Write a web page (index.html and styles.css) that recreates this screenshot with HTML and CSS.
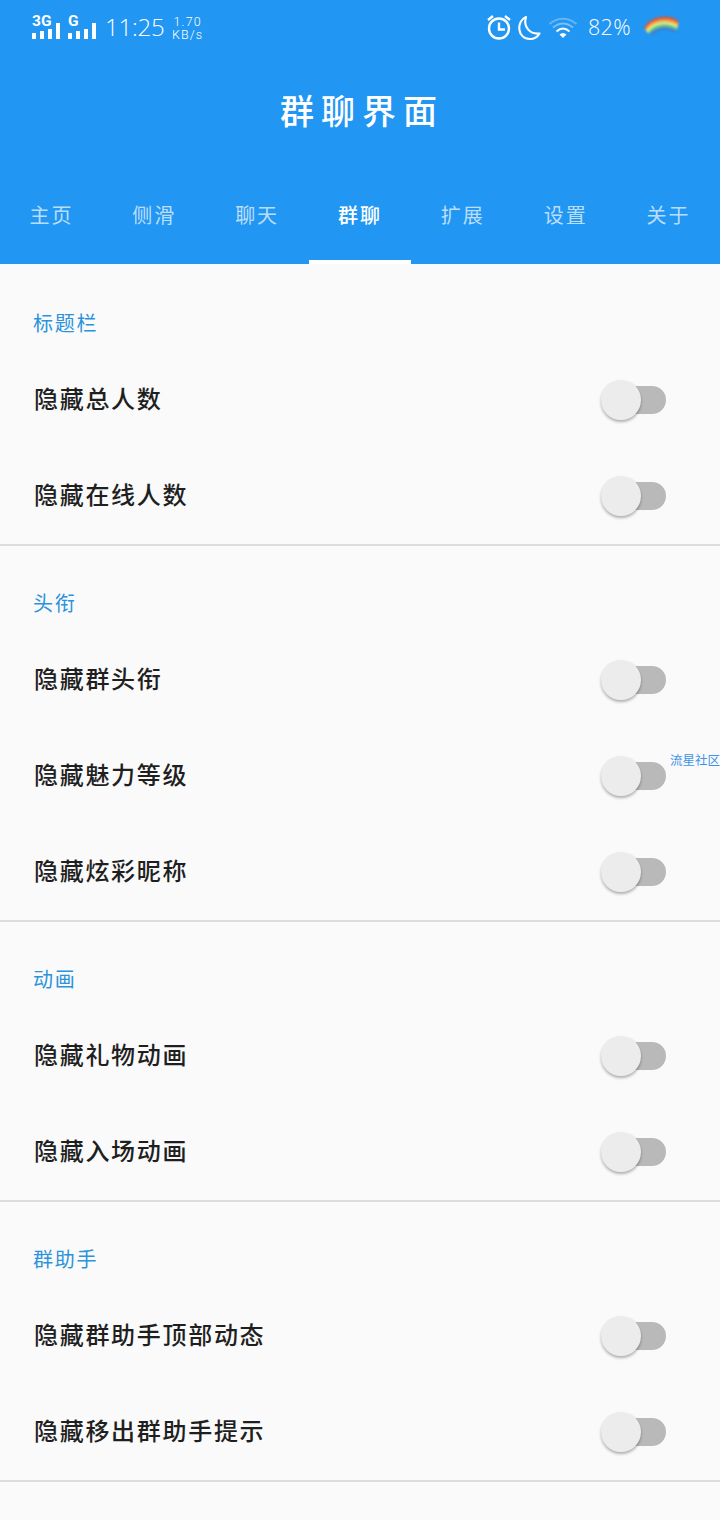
FILE: index.html
```html
<!DOCTYPE html>
<html lang="zh-CN">
<head>
    <meta charset="UTF-8">
    <meta name="viewport" content="width=device-width, initial-scale=1.0">
    <title>群聊界面</title>
    <link rel="stylesheet" href="styles.css">
</head>
<body>
    <header class="app-bar">
        <div class="status-bar">
            <div class="signal">
                <span class="signal-name">3G</span>
                <svg width="29" height="17" viewBox="0 0 29 17" fill="#fff"><path d="M0 11h4v6H0zM8 9h4v8H8zM16 7h4v10h-4zM24 1h4v16h-4z"/></svg>
            </div>
            <div class="signal">
                <span class="signal-name">G</span>
                <svg width="29" height="17" viewBox="0 0 29 17" fill="#fff"><path d="M0 11h4v6H0zM8 9h4v8H8zM16 7h4v10h-4zM24 1h4v16h-4z"/></svg>
            </div>
            <span class="clock">11:25</span>
            <span class="speed"><span>1.70</span><span>KB/s</span></span>
            <div class="status-right">
                <svg width="26" height="28" viewBox="0 0 26 28" fill="none" stroke="#fff" stroke-width="2.4">
                    <circle cx="13" cy="15.5" r="10"/>
                    <path d="M13 9.500v7h6M2 7l5-4M24 7l-5-4"/>
                </svg>
                <svg width="26" height="28" viewBox="0 0 26 28" fill="none" stroke="#fff" stroke-width="2.1" stroke-linejoin="round">
                    <path d="M9 4C-1 8 0 26 13 26C17 26 20.500 24 22.500 20.500C13 21.500 6 14 9 4z"/>
                </svg>
                <svg class="wifi" width="30" height="24" viewBox="0 0 30 24" fill="none" stroke="#fff" stroke-width="2">
                    <path d="M1.500 7Q15-3.500 28.500 7" opacity=".3"/>
                    <path d="M5 10.500Q15 2.500 25 10.500" opacity=".4"/>
                    <path d="M8.500 14.500Q15 8.500 21.500 14.500"/>
                    <path d="M11.500 17.500Q15 14.500 18.500 17.500L15 21z" fill="#fff" stroke="none"/>
                </svg>
                <span class="battery">82%</span>
                <svg class="rainbow" width="40" height="22" viewBox="0 0 40 22" fill="none" stroke-width="2.700">
                    <path d="M3 12C10 1 26-1 36 6" stroke="#e2552f"/>
                    <path d="M4 14C11 3.500 26 2 36 8.500" stroke="#f5a94a"/>
                    <path d="M5 16C12 6 26 5 35.500 11" stroke="#eef07a"/>
                    <path d="M7 17.500C13 9 26 8 35 13.500" stroke="#62c58c"/>
                    <path d="M9 18.500C15 12 26 11 34 15.500" stroke="#3f7fd0"/>
                </svg>
            </div>
        </div>
        <h1 class="title">群聊界面</h1>
        <nav class="tabs">
            <a class="tab">主页</a>
            <a class="tab">侧滑</a>
            <a class="tab">聊天</a>
            <a class="tab active">群聊</a>
            <a class="tab">扩展</a>
            <a class="tab">设置</a>
            <a class="tab">关于</a>
        </nav>
    </header>

    <main class="settings">
        <section class="group">
            <h2 class="group-title">标题栏</h2>
            <div class="row"><span>隐藏总人数</span><span class="switch"></span></div>
            <div class="row"><span>隐藏在线人数</span><span class="switch"></span></div>
        </section>
        <section class="group">
            <h2 class="group-title">头衔</h2>
            <div class="row"><span>隐藏群头衔</span><span class="switch"></span></div>
            <div class="row"><span>隐藏魅力等级</span><span class="switch"></span></div>
            <div class="row"><span>隐藏炫彩昵称</span><span class="switch"></span></div>
        </section>
        <section class="group">
            <h2 class="group-title">动画</h2>
            <div class="row"><span>隐藏礼物动画</span><span class="switch"></span></div>
            <div class="row"><span>隐藏入场动画</span><span class="switch"></span></div>
        </section>
        <section class="group">
            <h2 class="group-title">群助手</h2>
            <div class="row"><span>隐藏群助手顶部动态</span><span class="switch"></span></div>
            <div class="row"><span>隐藏移出群助手提示</span><span class="switch"></span></div>
        </section>
    </main>

    <div class="watermark">流星社区</div>
</body>
</html>
```

FILE: styles.css
```css
* {
    box-sizing: border-box;
}

body {
    margin: 0;
    height: 1520px;
    position: relative;
    overflow: hidden;
    background: #fafafa;
    color: #1f1f1f;
    font-family: "Noto Sans CJK SC", sans-serif;
}

.app-bar {
    height: 264px;
    background: #2196f3;
    color: #fff;
}

/* status bar */
.status-bar {
    display: flex;
    height: 56px;
    padding-left: 32px;
}

.signal {
    width: 36px;
    padding-top: 13px;
}

.signal-name {
    display: block;
    height: 9px;
    font: bold 15.5px/16px Roboto, sans-serif;
}

.signal svg {
    display: block;
}

.clock {
    width: 67px;
    margin-left: 1px;
    font-family: "Open Sans", sans-serif;
    font-weight: 300;
    font-size: 24px;
    line-height: 53px;
    letter-spacing: -0.2px;
}

.speed {
    display: flex;
    flex-direction: column;
    align-items: center;
    padding-top: 15px;
    font-family: Roboto, sans-serif;
    font-size: 12.5px;
    line-height: 13px;
    font-weight: 300;
    letter-spacing: 1.1px;
}

.status-right {
    display: flex;
    margin-left: auto;
    padding: 13px 38px 0 0;
}

.status-right svg + svg {
    margin-left: 5px;
}

.status-right .wifi {
    margin-top: 4px;
}

.battery {
    width: 47px;
    margin-left: 10px;
    font-family: "Open Sans", sans-serif;
    font-weight: 300;
    font-size: 21.5px;
    line-height: 27px;
    letter-spacing: 0.3px;
}

.rainbow {
    margin: 3px 0 0 7px;
    filter: blur(1px);
}

.title {
    height: 110px;
    margin: 0;
    padding-left: 4px;
    text-align: center;
    font-size: 34px;
    line-height: 107px;
    font-weight: 500;
    letter-spacing: 7px;
}

/* tabs */
.tabs {
    display: grid;
    grid-template-columns: repeat(7, 1fr);
    height: 98px;
}

.tab {
    height: 98px;
    text-align: center;
    font-size: 20px;
    line-height: 98px;
    letter-spacing: 2px;
    color: rgba(255, 255, 255, 0.7);
}

.tab.active {
    color: #fff;
    font-weight: 500;
    box-shadow: inset 0 -4px #fff;
}

/* settings list */
.settings {
    padding-top: 2px;
}

.group {
    border-bottom: 2px solid #dcdcdc;
}

.group-title {
    height: 86px;
    margin: 0;
    padding: 28px 0 0 33px;
    font-size: 20px;
    line-height: 58px;
    font-weight: 400;
    letter-spacing: 1.8px;
    color: #2a93dc;
}

.row {
    display: flex;
    justify-content: space-between;
    align-items: center;
    height: 96px;
    padding: 0 54px 0 34px;
    font-size: 24px;
    font-weight: 500;
    letter-spacing: 1.7px;
}

.row > span:first-child {
    margin-top: -6px;
}

.switch {
    display: flex;
    align-items: center;
    width: 56px;
    height: 28px;
    border-radius: 14px;
    background: #b9b9b9;
}

.switch::before {
    content: "";
    flex: none;
    width: 40px;
    height: 40px;
    margin-left: -9px;
    border-radius: 50%;
    background: #ececec;
    box-shadow: 0 2px 3px rgba(0, 0, 0, 0.3);
}

.watermark {
    position: absolute;
    top: 751px;
    right: 0;
    font-size: 12.5px;
    line-height: 17px;
    color: #3b93ea;
}
```
